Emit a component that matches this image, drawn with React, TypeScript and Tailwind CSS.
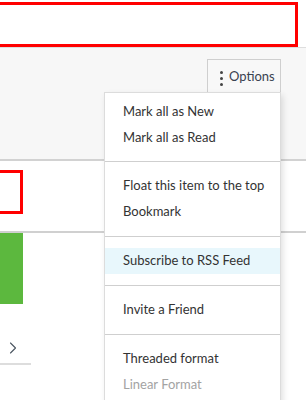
import { ChevronRight } from 'lucide-react'

const groups = [
  ['Mark all as New', 'Mark all as Read'],
  ['Float this item to the top', 'Bookmark'],
  ['Subscribe to RSS Feed'],
  ['Invite a Friend'],
  ['Threaded format', 'Linear Format'],
]

const OptionsMenu = () => {
  return (
    <div className='absolute left-[104px] top-[92px] w-[177px] bg-white border border-[#dcdcdc] shadow-[2px_3px_6px_rgba(0,0,0,0.12)]'>
      {groups.map((g, i) => (
        <div key={i}>
          {i > 0 && <div className='h-px bg-[#cfcfcf]' />}
          <div className={i === 0 ? 'pt-[6px] pb-[10px]' : 'py-[11px]'}>
            {g.map((item) => (
              <div
                key={item}
                className={
                  'h-[26px] flex items-center pl-[18px] ' +
                  (item === 'Subscribe to RSS Feed' ? 'bg-[#e8f7fc] ' : '') +
                  (item === 'Linear Format' ? 'text-[#a3a3a3]' : 'text-[#333]')
                }
              >
                {item}
              </div>
            ))}
          </div>
        </div>
      ))}
    </div>
  )
}

export default function App() {
  return (
    <div className="relative w-[306px] h-[400px] overflow-hidden bg-white text-[13px] font-['Lato',sans-serif]">
      {/* top search box */}
      <div className='h-[48px] pt-[2px] bg-white border-b border-[#dedede]'>
        <div className='-ml-[4px] w-[302px] h-[45px] border-[3px] border-[#ff0000]' />
      </div>

      {/* toolbar */}
      <div className='h-[113px] bg-[#f7f7f7] border-b-2 border-[#d2d2d2] flex justify-end items-start pt-[11px] pr-[25px]'>
        <button className='w-[74px] h-[36px] border border-[#cfcfcf] bg-[#f8f8f8] flex items-center pl-[12px] gap-[6px] text-[13px] text-[#3a4250]'>
          <span className='flex flex-col gap-[3px] pt-[2px]'>
            <span className='w-[3px] h-[3px] rounded-full bg-[#444]' />
            <span className='w-[3px] h-[3px] rounded-full bg-[#444]' />
            <span className='w-[3px] h-[3px] rounded-full bg-[#444]' />
          </span>
          Options
        </button>
      </div>

      {/* content */}
      <div className='pt-[9px]'>
        <div className='-ml-[4px] w-[27px] h-[44px] border-[3px] border-[#ff0000]' />
        <div className='mt-[17px] h-[2px] bg-[#d0d0d0]' />
        <div className='w-[23px] h-[71px] bg-[#5cb83e]' />
        <div className='mt-[34px] pl-[3px] h-[20px] flex items-center text-[#4a5560]'>
          <ChevronRight size={20} strokeWidth={1.3} />
        </div>
        <div className='mt-[5px] w-[31px] h-[2px] bg-[#dddddd]' />
      </div>

      <OptionsMenu />
    </div>
  )
}
